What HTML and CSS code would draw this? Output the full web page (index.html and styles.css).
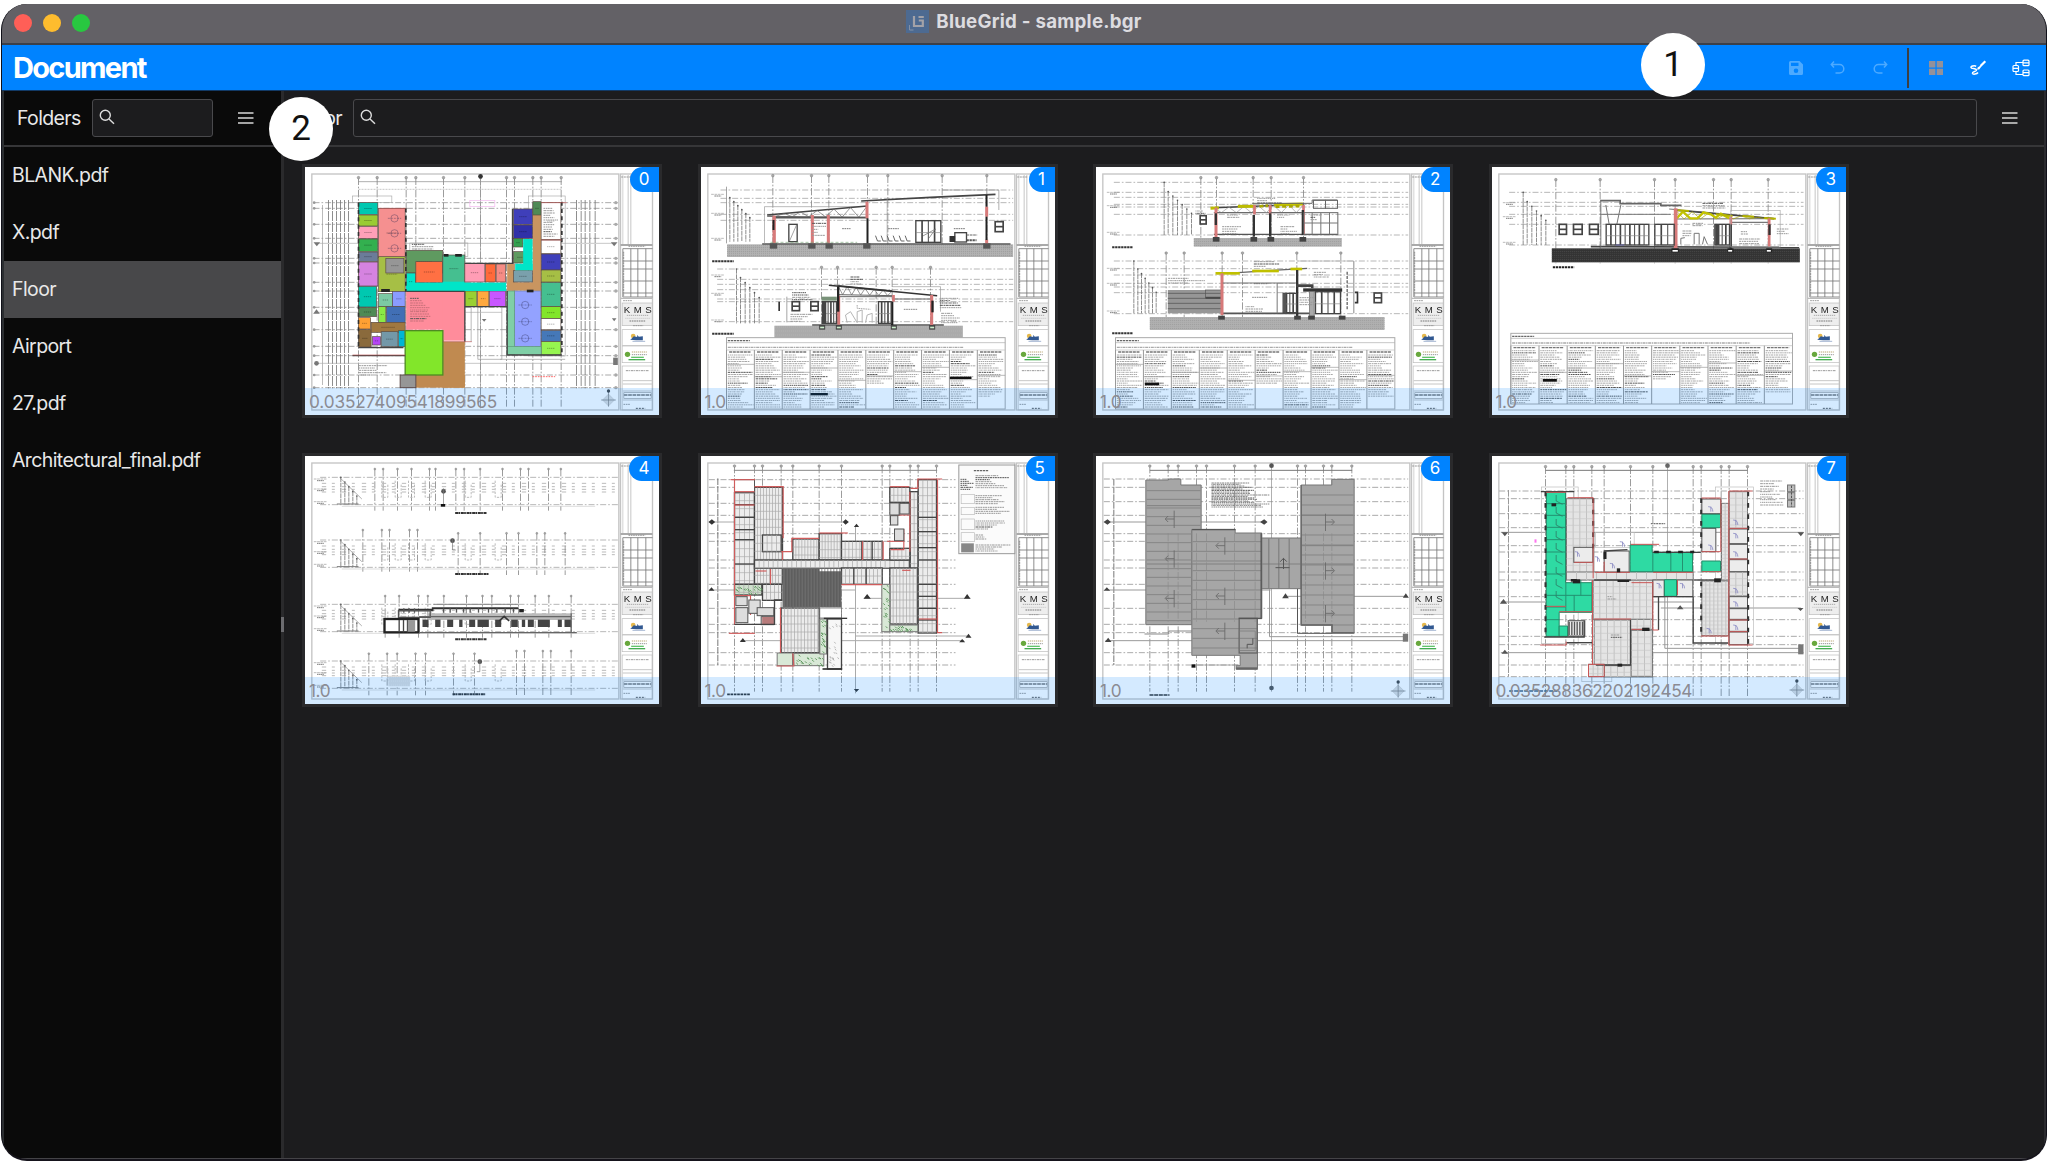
FILE: index.html
```html
<!DOCTYPE html>
<html lang="en">
<head>
<meta charset="utf-8">
<title>BlueGrid - sample.bgr</title>
<link rel="stylesheet" href="styles.css">
</head>
<body>
<div class="window">
  <div class="titlebar">
    <div class="lights"><i class="red"></i><i class="yellow"></i><i class="green"></i></div>
    <svg class="logo" viewBox="0 0 23 23"><rect width="23" height="23" fill="#4d6a91"/><path d="M8 6v10h8.800v-5.500h-4M12.500 7h5.300" fill="none" stroke="#a3a2a8" stroke-width="2.200"/><path d="M3.500 15v5h4" fill="none" stroke="#8491a5" stroke-width="1"/></svg>
    <span class="title">BlueGrid - sample.bgr</span>
  </div>
  <header class="header">
    <h1>Document</h1>
    <nav class="tools">
      <svg class="dim" viewBox="0 0 18 18"><path fill="currentColor" fill-rule="evenodd" d="M3.500 2h9L16 5.500v9a1.500 1.500 0 0 1-1.500 1.500h-11A1.500 1.500 0 0 1 2 14.500v-11A1.500 1.500 0 0 1 3.500 2zM4 3.700v3.300h7.500V3.700zM9 9.500a2.300 2.300 0 1 0 0 4.600 2.300 2.300 0 0 0 0-4.600z"/></svg>
      <svg class="dim" viewBox="0 0 18 18"><path d="M5 2.500 2.300 5.500 5 8.500M2.500 5.500h8a4.300 4.300 0 0 1 0 8.600H6.500"/></svg>
      <svg class="dim" viewBox="0 0 18 18"><path d="M13 2.500l2.700 3L13 8.500M15.500 5.500h-8a4.300 4.300 0 0 0 0 8.600h4"/></svg>
      <span class="sep"></span>
      <svg class="grey" viewBox="0 0 18 18"><path fill="currentColor" stroke="none" d="M2 2h6.400v6.400H2zM9.700 2H16v6.400H9.700zM2 9.700h6.400V16H2zM9.700 9.700H16V16H9.700z"/></svg>
      <svg viewBox="0 0 18 18"><path d="M7.200 7.200C5 6.400 1.600 7.200 2 8.600c.4 1.300 5.300.7 5.600 2.400.3 1.500-4.600 1.600-4.200 3.200.5 1.700 4.600.8 5.600-.7"/><path d="M16.300 2.300 11.500 7" stroke-width="2.200"/><path d="M11.600 6.600 8.600 8.500l-.4 2.200 2.200-.4 2-2.800z" fill="currentColor" stroke="none"/></svg>
      <svg class="flow" viewBox="0 0 20 18"><rect x="2" y="6.500" width="5.500" height="6" rx="1"/><path d="M2 9.300h5.500"/><rect x="12" y="1.200" width="6" height="5.500" rx="1"/><path d="M12 3.800h6"/><rect x="12" y="11" width="6" height="5.700" rx="1"/><path d="M12 13.700h6M5 6.500V3.500h7M5 12.500V15.500h7"/></svg>
    </nav>
  </header>
  <div class="body">
    <aside class="sidebar">
      <div class="bar">
        <span class="label">Folders</span>
        <div class="search"><svg viewBox="0 0 16 16"><circle cx="6.300" cy="6.300" r="5"/><path d="M10 10l5 4.800"/></svg></div>
        <svg class="menu" viewBox="0 0 16 14"><path d="M0 2h15.500M0 7h15.500M0 12h15.500"/></svg>
      </div>
      <ul class="folders">
        <li>BLANK.pdf</li>
        <li>X.pdf</li>
        <li class="active">Floor</li>
        <li>Airport</li>
        <li>27.pdf</li>
        <li>Architectural_final.pdf</li>
      </ul>
    </aside>
    <div class="divider"><i></i></div>
    <main class="main">
      <div class="bar">
        <span class="label">Floor</span>
        <div class="search"><svg viewBox="0 0 16 16"><circle cx="6.300" cy="6.300" r="5"/><path d="M10 10l5 4.800"/></svg></div>
        <svg class="menu" viewBox="0 0 16 14"><path d="M0 2h15.500M0 7h15.500M0 12h15.500"/></svg>
      </div>
      <div class="sheets">
        <figure><svg class="sheet" viewBox="30 36 1064 744"></svg><b>0</b><figcaption class="wide-a">0.03527409541899565</figcaption></figure>
        <figure><svg class="sheet" viewBox="32 36 1064 744"></svg><b>1</b><figcaption>1.0</figcaption></figure>
        <figure><svg class="sheet" viewBox="32 36 1064 744"></svg><b>2</b><figcaption>1.0</figcaption></figure>
        <figure><svg class="sheet" viewBox="34 36 1064 744"></svg><b>3</b><figcaption>1.0</figcaption></figure>
        <figure><svg class="sheet" viewBox="30 33 1064 744"></svg><b>4</b><figcaption>1.0</figcaption></figure>
        <figure><svg class="sheet" viewBox="32 33 1064 744"></svg><b>5</b><figcaption>1.0</figcaption></figure>
        <figure><svg class="sheet" viewBox="32 33 1064 744"></svg><b>6</b><figcaption>1.0</figcaption></figure>
        <figure><svg class="sheet" viewBox="34 33 1064 744"></svg><b>7</b><figcaption class="wide-b">0.035288362202192454</figcaption></figure>
      </div>
    </main>
  </div>
</div>
<div class="callout one">1</div>
<div class="callout two">2</div>
<script src="sheets.js"></script>
</body>
</html>
```
FILE: styles.css
```css
* { box-sizing: border-box; }
body { margin: 0; width: 2048px; height: 1162px; padding: 4px 1px 1px 1px; background: #fff; overflow: hidden; position: relative; font-family: Inter, "Liberation Sans", sans-serif; }
.window { height: 1157px; border-radius: 26px; overflow: hidden; display: flex; flex-direction: column; background: #1c1c1e; border: 1px solid #101019; border-top: 0; border-bottom: 2px solid #15131b; }
.titlebar { height: 41px; flex: none; background: #636166; border-bottom: 2px solid #3c4048; display: flex; align-items: center; justify-content: center; gap: 7px; position: relative; padding-bottom: 4px; }
.lights { position: absolute; left: 12px; top: 10px; display: flex; gap: 11px; }
.lights i { width: 18px; height: 18px; border-radius: 50%; }
.red { background: #ff5f57; }
.yellow { background: #febc2e; }
.green { background: #28c840; }
.logo { width: 23px; height: 23px; }
.title { font-size: 18.700px; font-weight: 700; color: #dddce0; letter-spacing: .25px; }
.header { height: 46px; flex: none; background: #0083ff; border-bottom: 1px solid #123a66; display: flex; align-items: center; justify-content: space-between; padding: 0 15px 0 11px; }
.header h1 { margin: 0; font-size: 29px; line-height: 46px; color: #fff; font-weight: 700; letter-spacing: -1.700px; }
.tools { display: flex; align-items: center; padding-top: 1px; }
.tools svg { width: 18px; height: 18px; margin-right: 24px; color: #fff; fill: none; stroke: currentColor; stroke-width: 1.500; }
.tools svg.dim { color: #4daaff; }
.tools svg.dim:first-child { stroke: none; }
.tools svg.grey { color: #93919a; }
.tools svg.flow { width: 20px; margin-right: 0; stroke-width: 1.200; }
.sep { width: 2px; height: 40px; background: #3d3f43; margin: 0 18px 0 -6px; }
.body { flex: 1; display: flex; min-height: 0; border-bottom: 1px solid #444347; }
.sidebar { width: 279px; background: #0a0a0a; border-left: 2px solid #2b2e31; }
.divider { width: 3px; background: #2a2a2c; display: flex; align-items: center; }
.divider i { width: 3px; height: 15px; background: #6c6c70; margin-top: 0; }
.main { flex: 1; min-width: 0; border-right: 2px solid #2b2b2f; }
.bar { height: 56px; border-bottom: 2px solid #363638; display: flex; align-items: center; color: #e8e8e8; }
.label { font-size: 19.500px; line-height: 24px; letter-spacing: -.65px; }
.search { height: 38px; border: 1px solid #49494c; border-radius: 3px; background: #1c1c1e; display: flex; align-items: center; padding: 0 6px 2px; }
.search svg { width: 16px; height: 16px; fill: none; stroke: #dcdcdc; stroke-width: 1.400; }
.menu { width: 16px; height: 14px; fill: none; stroke: #d8d8d8; stroke-width: 1.400; }
.sidebar .label { width: 79px; padding-left: 13px; margin-right: 9px; }
.sidebar .search { width: 121px; }
.sidebar .menu { margin-left: 25px; }
.main .label { width: 69px; text-align: right; padding-right: 11px; }
.main .search { flex: 1; }
.main .menu { margin: 0 26px 0 25px; }
.folders { list-style: none; margin: 0; padding: 0; }
.folders li { height: 57px; line-height: 57px; padding-left: 8px; font-size: 19.500px; letter-spacing: -.6px; color: #e8e8e8; }
.folders .active { background: #48484a; }
.sheets { padding: 17px 0 0 18px; display: grid; grid-template-columns: repeat(4, 360px); grid-auto-rows: 254px; gap: 35px 35.500px; }
figure { margin: 0; border: 3px solid #2a2a2c; background: #fff; position: relative; overflow: hidden; }
.sheet { display: block; width: 355px; height: 248px; filter: blur(.75px); }
figure b { position: absolute; top: 0; right: 0; height: 25px; line-height: 25px; padding: 0 10px 0 9px; background: #0083ff; color: #fff; border-radius: 13px 0 0 13px; font-weight: 400; font-size: 17px; letter-spacing: -.4px; }
figcaption { position: absolute; left: 0; right: 0; bottom: 0; height: 27px; line-height: 28px; padding-left: 4px; background: rgba(0, 131, 255, .17); color: #8b8b92; font-size: 17.200px; letter-spacing: -.4px; white-space: nowrap; }
.wide-a { letter-spacing: -.12px; }
.wide-b { letter-spacing: -.3px; }
.callout { position: absolute; width: 64px; height: 64px; border-radius: 50%; background: #fff; color: #111; font: 35px/64px Roboto, sans-serif; text-align: center; }
.one { left: 1641px; top: 33px; }
.two { left: 269px; top: 97px; }
```
FILE: sheets.js
```js
let seed = 7;
const rnd = () => (seed = (seed * 16807) % 2147483647) / 2147483647;
const line = (pts, c = '#777', w = 2, dash = '') =>
  `<polyline points="${pts}" fill="none" stroke="${c}" stroke-width="${w}" stroke-dasharray="${dash}"/>`;
const lines = (list, c, w, dash) => list.split(';').map(p => line(p, c, w, dash)).join('');
const rect = (x, y, w, h, fill = 'none', stroke = 'none', sw = 2) =>
  `<rect x="${x}" y="${y}" width="${w}" height="${h}" fill="${fill}" stroke="${stroke}" stroke-width="${sw}"/>`;
const rects = (list, fill, stroke, sw) => list.split(';').map(r => rect(...r.split(' '), fill, stroke, sw)).join('');
const rooms = (list, stroke = '#5a4a42') => list.split(';').map(r => {
  const [x, y, w, h, c] = r.trim().split(' ');
  return rect(x, y, w, h, '#' + c, stroke, 2) + line(`${+x + w * .3},${+y + h / 2} ${+x + w * .7},${+y + h / 2}`, 'rgba(0,0,0,.3)', 3, '4 2');
}).join('');
const notes = (x, y, w, h, step = 7, c = '#999') => {
  let s = '';
  for (let i = y; i < y + h; i += step) s += line(`${x},${i} ${x + w * (.4 + rnd() * .6)},${i}`, rnd() > .85 ? '#555' : c, 3, `${3 + (rnd() * 7 | 0)} 2 5 1.500`);
  return s;
};
/* column axes with bubbles, and level lines */
const axes = (xs, y1, y2, c = '#888', r = 4) => xs.split(' ').map(x =>
  line(`${x},${y1} ${x},${y2}`, c, 2.500, '22 5 5 5') + `<circle cx="${x}" cy="${y1}" r="${r}" fill="#aaa" stroke="#666"/>`).join('');
const levels = (ys, x1, x2, c = '#a8a8a8', dash = '18 6 5 6') => ys.split(' ').map(y => line(`${x1},${y} ${x2},${y}`, c, 2.500, dash)).join('');
const marks = (x, ys) => ys.split(' ').map(y => line(`${x - 10},${y} ${x + 30},${y}`, '#999', 2, '8 2') + line(`${x},${+y + 5} ${x + 20},${+y + 5}`, '#666', 3, '4 2')).join('');
const stairs = (x, y, bottom, n, dx, dy) => {
  let s = '';
  for (let i = 0; i < n; i++) s += line(`${x + i * dx},${y + i * dy} ${x + i * dx},${bottom}`, '#777', 2.500, '14 2') + `<circle cx="${x + i * dx}" cy="${y + i * dy}" r="2.500" fill="#555"/>`;
  return s;
};
const table = (x, y, w, h, cols) => {
  let s = rect(x, y, w, h, 'none', '#aaa', 3) + line(`${x},${y + 15} ${x + w},${y + 15}`, '#aaa') + line(`${x + 4},${y + 9} ${x + 70},${y + 9}`, '#666', 4, '7 2') +
    line(`${x + 4},${y + 29} ${x + w * .85},${y + 29}`, '#aaa', 4, '9 2 4 2') + line(`${x},${y + 37} ${x + w},${y + 37}`, '#bbb');
  const cw = w / cols;
  for (let i = 0; i < cols; i++) {
    s += line(`${x + i * cw},${y + 37} ${x + i * cw},${y + h}`, '#999', 3);
    s += line(`${x + i * cw + 8},${y + 43} ${x + (i + 1) * cw - 10},${y + 43}`, '#777', 4, '9 2');
    s += notes(x + i * cw + 4, y + 52, cw - 6, i === 9 ? (h - 52) * .8 : i === 5 ? 90 : h - 54, 6.500, '#a8a8a8');
    s += line(`${x + i * cw},${y + 80 + (i * 37 % 50)} ${x + (i + 1) * cw},${y + 80 + (i * 37 % 50)}`, '#999');
  }
  return s;
};
const soil = (x, y, w, h, c = '#b2b2b2', d = '#8c8c8c') => {
  let s = rect(x, y, w, h, c);
  for (let i = 4; i < h; i += 6) s += line(`${x},${y + i} ${x + w},${y + i}`, d, 2, i % 4 ? '3 3' : '2 4');
  return s;
};
const windowBox = (x, y, w = 24, h = 30) => rect(x, y, w, h, '#fff', '#444', 5) + line(`${x},${y + h / 2} ${x + w},${y + h / 2}`, '#444', 5);

const frame = () => rect(50, 57, 921, 708, 'none', '#c4c4c4', 4) + rect(976, 57, 96, 708, 'none', '#c4c4c4', 4) +
  line('999,60 999,268', '#aaa') + line('1007,60 1007,268', '#aaa') + line('983,60 983,268', '#bbb') + line('978,66 1010,66', '#999', 3, '6 2') +
  line('976,270 1072,270', '#aaa', 6) + line('1000,274 1050,274', '#666', 2, '5 2') +
  lines('983,281 1072,281;983,318 1072,318;983,342 1072,342;983,378 1072,378;983,414 1072,414;983,426 1072,426;983,281 983,426;1007,281 1007,426;1028,281 1028,426;1052,281 1052,426', '#777', 2.500) +
  line('985,290 985,422', '#999', 4, '6 2') +
  line('976,430 1072,430', '#bbb', 4) + line('984,437 1010,437', '#999', 3, '5 2') + rect(981, 444, 90, 68, '#eee', '#bbb') +
  '<text x="986" y="474" font-family="Liberation Sans" font-size="29" textLength="84" fill="#222">K M S</text>' +
  line('995,481 1060,481', '#aaa', 3, '4 2') + line('990,490 1065,490', '#bbb', 2, '4 2') + line('1003,498 1052,498', '#777', 3, '5 2') + line('1014,512 1044,512', '#777', 2, '5 2') +
  rect(981, 524, 90, 47, '#fff', '#bbb') + '<circle cx="1014" cy="543" r="7" fill="#e5b84c"/><path d="M1008 552l8-8 10 2 0-6 5 5 12-1v12h-20l-18-2z" fill="#315891"/>' + line('1012,559 1050,559', '#7893bb') +
  rect(981, 573, 90, 50, '#fff', '#bbb') + '<circle cx="997" cy="598" r="8" fill="#68a83d"/>' + line('1010,591 1055,591', '#bca876', 3, '4 2') + line('1010,599 1055,599', '#999', 3, '4 2') + line('1008,607 1046,607', '#62c36c', 4) + line('1000,614 1050,614', '#45ad52', 4) +
  rect(981, 633, 90, 132, 'none', '#bbb') + line('992,647 1062,647', '#999', 3, '8 2 3 2') + lines('983,677 1070,677;983,687 1070,687;983,708 1070,708;983,735 1070,735', '#aaa') +
  line('986,720 1068,720', '#777', 4, '11 2') + rect(986, 713, 82, 17, 'none', '#999') + line('985,748 1005,748', '#999', 3, '5 2') + line('1022,760 1050,760', '#555', 3, '6 3');

const compass = (x, y) => `<path d="M${x} ${y - 18}l18 18-18 18-18-18z" fill="#ddd" stroke="#aaa"/>` + lines(`${x},${y - 30} ${x},${y + 20};${x - 22},${y} ${x + 22},${y}`, '#777') + `<circle cx="${x}" cy="${y - 27}" r="5" fill="#444"/>`;
const planAxes = (xs, ys) => axes(xs, 68, 755) + levels(ys, 55, 968, '#999') + line('190,80 800,80', '#888') + line('190,103 800,103', '#aaa', 2, '6 3') +
  ys.split(' ').map(y => `<circle cx="57" cy="${y}" r="4" fill="#999"/><circle cx="962" cy="${y}" r="5" fill="#aaa"/>`).join('');
const truss = (x1, y1, x2, y2, h1, h2, c = '#666') => {
  let s = line(`${x1},${y1} ${x2},${y2}`, '#444', 4.500) + line(`${x1},${y1 + h1} ${x2},${y2 + h2}`, '#666', 3), z = '';
  for (let i = 0; i <= 12; i++) { const t = i / 12; z += `${x1 + (x2 - x1) * t},${y1 + (y2 - y1) * t + (i % 2 ? h1 + (h2 - h1) * t : 0)} `; }
  return s + line(z, c, 2);
};
const doors = (x, y, w, h, n) => { let s = rect(x, y, w, h, 'none', '#444', 4); for (let i = 1; i < n; i++) s += line(`${x + w * i / n},${y} ${x + w * i / n},${y + h}`, '#444', i % 2 ? 5 : 3); return s + line(`${x},${y + h * .55} ${x + w},${y + h * .55}`, '#888'); };

const sheets = [
  () => planAxes('190 246 333 362 445 509 556 634 658 713 738 798', '143 160 208 250 310 324 382 408 457 524 574 602 660 698') +
    [100, 112, 124, 136, 148, 160, 844, 858, 870, 884, 900].map(x => line(`${x},135 ${x},700`, '#777', 2.500, '30 3')).join('') +
    line('82,150 82,690', '#999') + line('60,265 960,265', '#aaa') + line('60,472 620,472', '#aaa') + line('60,625 960,625', '#aaa') +
    rect(172, 123, 118, 20, 'none', '#aaa') + rect(700, 123, 110, 480, 'none', '#aaa') + rect(344, 264, 174, 40, 'none', '#aaa') + line('556,60 556,760', '#999') +
    lines('548,458 548,613 620,613 620,458;528,458 528,560;615,613 810,613', '#999') + rect(524, 136, 75, 19, 'none', '#f4b7ef') +
    rooms('190 143 58 35 00c8b0;190 180 58 33 99cc33;190 215 58 35 ffa0b8;190 252 58 37 33b04f;190 291 58 28 6b7c99;190 321 58 72 d583e0;190 394 54 62 00c8b0;190 457 54 28 4f8a55;190 488 36 34 ffa033;190 524 38 52 8a6a3c;250 160 80 148 f59090;250 305 80 105 a6bf45;272 310 54 44 969696;250 416 42 38 7cc9a4;292 409 38 45 8a9cff;250 455 22 47 8aea45;274 455 56 47 416fb5;228 502 102 30 a07840;258 530 50 45 7398a8;310 527 20 48 00b5d5;232 545 24 25 b545f5;333 286 110 68 5f9a60;333 354 28 52 00e5c8;362 320 80 62 ff7043;443 300 66 82 45bf90;509 325 60 56 ff9db5;571 327 30 54 ff6a3a;603 327 28 54 f58c85;509 408 36 46 99d033;547 408 34 46 ffa93f;583 408 48 46 c857ff') +
    rect(333, 383, 300, 25, '#00e5c8') + rect(443, 380, 65, 35, '#00e5c8') + rects('333 409 176 115;443 409 66 148', '#ff8c9b') + rects('443 560 66 138;362 660 147 38', '#c08a50') +
    rect(330, 527, 113, 133, '#82e62a', '#4e8c22', 4) + rect(315, 660, 47, 38, '#969696', '#5c4a4a', 3) + rects('636 327 22 80;636 382 100 25;713 180 25 227', '#c99560') +
    rooms('655 162 57 46 3f3fba;655 210 57 40 3030a8;655 250 28 26 33a04f;655 290 38 34 5f9a60;655 347 57 34 7aa0ac;713 140 25 40 4f8a55;738 143 59 110 ffffff;738 255 59 40 ffffff;738 297 59 48 3f3fba;738 345 59 36 a6bf45;738 382 59 72 45bf90;738 455 59 36 82e62a;738 491 59 33 ffffff;738 526 59 33 4578b8;738 560 59 40 96f550') +
    rects('684 252 28 93;660 326 52 20', '#00e5c8') + rect(658, 408, 78, 166, '#93a2ff', '#6d7caf') + rects('636 408 22 190;636 575 102 23', '#7fcfa6', '#5e9a7c') +
    lines('800,140 800,602;332,160 332,410;190,143 190,576', '#333', 5, '12 10') + lines('172,602 330,602;190,578 325,578;636,408 636,600 800,600;509,455 636,455;652,162 652,325;509,325 655,325;333,409 509,409;509,409 509,560', '#444', 4) +
    lines('172,600 330,600;250,160 332,160;443,560 530,560;738,143 815,143;738,255 800,255', '#b55', 2) +
    [[690, 450], [690, 500], [690, 550], [298, 190], [298, 235], [298, 280]].map(([x, y]) => `<circle cx="${x}" cy="${y}" r="11" fill="none" stroke="rgba(40,40,80,.35)" stroke-width="3"/>` + line(`${x - 20},${y} ${x + 20},${y}`, 'rgba(40,40,80,.35)', 3, '6 3')).join('') +
    notes(345, 430, 65, 40, 7, '#c56f78') + notes(345, 470, 65, 30, 7, '#c56f78') + notes(745, 160, 46, 85, 7) + notes(190, 632, 90, 30) + notes(350, 268, 85, 15) + line('712,665 780,665', '#f66', 3, '5 3') +
    rects('258 402 26 9;695 404 20 8;446 297 14 8;480 297 20 8', '#222') + '<circle cx="556" cy="64" r="7" fill="#333"/><circle cx="64" cy="625" r="7" fill="#777"/><path d="M55 262h20l-10 12zM947 262h20l-10 12zM54 476l10-13 10 13zM560 492h14l-7 8zM950 490h14l-7 9z" fill="#777"/>' + rect(954, 608, 14, 22, '#777') + compass(940, 735),

  () => levels('105 130 143 178 196', 90, 968) + axes('247 363 415 531 592 755 889', 62, 300) + stairs(118, 128, 260, 6, 12, 12) + marks(72, '118 175 250 360 415 495') + line('108,95 108,265', '#777') +
    soil(110, 268, 858, 38) + line('215,267 960,267', '#555', 5) + line('222,265 222,155 510,155', '#999') + line('755,105 925,105 925,165', '#888') +
    truss(230, 180, 530, 153, 4, 34) + line('250,188 530,188', '#555', 5) + line('512,138 720,127 915,118', '#444', 5) + line('590,131 590,262', '#999') +
    rects('246 182 10 82;361 180 9 85;409 180 9 85;525 140 9 50;884 155 9 30;884 254 9 12', '#d77a7a') + lines('249,195 249,225;531,190 531,265;888,120 888,155;888,185 888,255', '#222', 6) +
    rects('238 265 22 16;353 265 22 16;405 265 22 16;518 265 22 16;878 265 22 16', '#555') + rect(295, 208, 25, 52, '#fff', '#444', 4) + line('297,258 318,210', '#777') + doors(676, 197, 75, 65, 4) + line('697,243 735,222 715,250', '#666') +
    windowBox(914, 200) + rect(793, 233, 35, 28, '#fff', '#444', 4) + rect(777, 243, 17, 18, '#333') + line('828,240 860,240', '#666', 3, '8 2') + line('828,256 858,256', '#555', 6, '7 2') +
    [555, 572, 590, 608, 626, 644].map(x => line(`${x},242 ${x + 6},258 ${x + 16},258`, '#666', 3)).join('') + notes(365, 205, 45, 45, 9) + line('455,221 480,221', '#777', 3, '5 2') + line('593,221 625,221', '#777', 3, '5 2') + line('790,221 825,221', '#777', 3, '5 2') + line('240,262 500,262', '#7aa87a', 2, '9 6') +
    line('65,319 130,319', '#333', 6, '7 2') + levels('342 373 388 404 432 440 500', 80, 968) + axes('393 441 557 605 720', 337, 545) + stairs(138, 342, 505, 1, 1, 1) + stairs(150, 368, 505, 5, 14, 15) +
    soil(252, 512, 565, 36) + line('365,510 760,510', '#555', 5) + truss(443, 392, 605, 408, 27, 14) + line('415,391 540,403 740,422', '#333', 4.500) + lines('605,432 722,432;445,425 605,425', '#666', 3) + line('605,395 750,395 750,470', '#999') +
    rects('440 422 9 87;719 420 9 90;605 420 8 20', '#d77a7a') + lines('443,395 443,470;605,440 605,510;726,437 726,472', '#222', 7) + rect(393, 425, 46, 12, '#799279') + doors(396, 440, 42, 65, 5) + doors(564, 440, 38, 65, 4) + rect(397, 440, 10, 65, '#444') +
    windowBox(305, 440, 22, 27) + windowBox(361, 440, 22, 27) + line('266,440 266,468', '#333', 5) + line('289,425 289,502', '#777') + notes(305, 413, 78, 22) + notes(300, 478, 70, 25) + notes(748, 430, 66, 30) + notes(752, 475, 60, 30) + notes(480, 366, 48, 22) +
    rects('386 510 18 14;436 510 18 14;601 510 18 14;716 510 18 14', '#444') + rects('389 515 12 5;439 515 12 5;604 515 12 5;719 515 12 5', '#cec') + lines('470,503 465,480 480,470 500,503;500,503 500,470 515,465 515,503;525,503 530,480 545,475 545,503', '#b5b5b5', 3) + line('640,463 680,463', '#888', 3, '5 2') + line('500,450 500,460 540,463', '#aaa', 3, '5 2') +
    line('65,536 130,536', '#333', 6, '7 2') + table(108, 548, 836, 214, 10) + rects('778 665 65 7;360 714 52 7', '#111'),

  () => levels('82 112 127 148 156 178 240', 85, 968) + axes('346 393 503 557 654', 68, 280) + stairs(236, 82, 240, 1, 1, 1) + stairs(248, 110, 240, 6, 14, 13) + marks(74, '112 152 232 340 385 468') + soil(325, 249, 444, 26) + line('385,238 755,238', '#555', 4) +
    truss(385, 158, 655, 148, 15, 25, '#999') + line('375,160 400,158', '#bcbc00', 9) + line('457,154 510,154', '#bcbc00', 9) + line('522,154 548,152', '#a9a900', 8, '12 6') + line('566,149 652,147', '#c4c400', 9) + line('570,155 650,153', '#aaa800', 8, '12 8') +
    rects('387 158 9 90;503 150 8 28;550 150 8 28;650 150 8 90', '#d77a7a') + lines('391,175 391,210;505,180 505,245;554,175 554,245;652,165 652,240', '#333', 7) + lines('395,173 500,173;555,173 650,173;500,145 680,145 680,135 755,135', '#666', 3) +
    rects('655 173 102 66;684 136 36 24;720 136 36 24', 'none', '#666', 3) + lines('680,173 680,238;706,173 706,238;732,173 732,238;655,204 757,204', '#777', 3) + windowBox(344, 182, 18, 25) + notes(515, 130, 75, 18) + notes(410, 215, 60, 24) + notes(585, 215, 50, 24) + notes(425, 180, 40, 8) + notes(575, 180, 40, 8) + notes(330, 168, 40, 12) + notes(675, 180, 35, 20) +
    rects('382 246 20 14;495 246 20 14;546 246 20 14;642 246 20 14', '#444') + line('80,277 143,277', '#333', 6, '7 2') +
    levels('318 341 360 385 396 413 476', 85, 968) + axes('242 296 410 471 634 766', 294, 522) + stairs(145, 318, 475, 1, 1, 1) + stairs(157, 342, 475, 6, 11, 14) + soil(193, 486, 704, 39) + line('410,475 680,475', '#555', 5) +
    rect(247, 405, 162, 70, '#969696') + lines('247,415 409,415;247,430 409,430;247,445 409,445;247,461 409,461', '#666', 3) + line('360,428 407,428', '#333', 5) + rect(360, 405, 47, 22, 'none', '#555') + line('395,356 470,352 560,346 665,340', '#666', 4) + lines('390,355 463,355;500,348 580,348;615,342 650,342', '#c0c000', 8) +
    rects('405 355 9 125', '#d77a7a') + lines('412,384 632,384;575,384 575,475', '#777', 3) + line('635,345 635,485', '#333', 7) + doors(593, 415, 40, 58, 4) + rect(593, 415, 9, 58, '#555') + line('632,392 680,392 680,400', '#444', 8) + rect(653, 400, 117, 10, '#333') + doors(690, 410, 75, 66, 4) + rect(672, 410, 14, 75, '#aaa', '#666') +
    lines('805,318 805,475', '#888', 3) + line('637,318 805,318', '#aaa') + windowBox(866, 414, 22, 29) + line('808,412 816,412 816,443 808,443', '#333', 5) + lines('785,350 785,465', '#666', 4, '9 4') + notes(505, 320, 85, 20) + notes(685, 352, 50, 20) + notes(480, 455, 55, 18) + notes(642, 428, 50, 24) + line('500,427 545,427', '#888', 3, '5 2') + line('505,386 548,386', '#777', 3, '5 2') + notes(248, 370, 130, 20) +
    rects('398 482 20 12;626 482 20 12;668 482 20 12;760 482 20 12', '#444') + line('80,535 143,535', '#333', 6, '7 2') + table(90, 548, 838, 214, 10) + rect(178, 683, 43, 8, '#111'),

  () => levels('112 142 154 178 208 270', 85, 968) + axes('225 358 521 583 698 751 862', 74, 325) + stairs(127, 112, 270, 1, 1, 1) + stairs(139, 140, 270, 5, 14, 14) + marks(76, '143 185 262') + soil(213, 280, 744, 42, '#333', '#5a5a5a') + line('330,275 955,277', '#444', 5) +
    line('358,137 418,137 418,146 540,146 540,151 602,151', '#666', 5) + lines('360,137 360,275;375,150 385,208;420,150 408,208;358,178 570,178;565,162 880,190', '#777', 3) + truss(585, 166, 880, 191, 26, 0, '#a8a800') + line('588,190 606,170 628,190 650,190 668,172 690,178 705,188 720,176 745,190', '#c4c400', 7) + lines('590,166 625,168;785,183 820,185;850,189 885,191;705,178 755,183', '#b5b500', 6) +
    line('750,202 865,202', '#777', 4) + rects('579 160 11 120;746 185 8 25;861 190 8 85', '#d77a7a') + lines('750,208 750,282;866,208 866,240', '#333', 7) + windowBox(235, 208, 22, 30) + windowBox(278, 208, 26, 30) + windowBox(326, 208, 26, 30) +
    doors(376, 208, 128, 62, 9) + doors(522, 208, 58, 62, 3) + doors(702, 208, 44, 62, 4) + rect(703, 210, 12, 60, '#444') + rect(750, 166, 148, 110, 'none', '#aaa') + lines('600,268 600,250 612,248;640,268 640,235 655,235 655,268;665,268 670,245 680,268', '#777', 3) + notes(605, 228, 60, 15) + notes(780, 230, 40, 8) + notes(775, 252, 70, 20) + notes(888, 222, 38, 20) + notes(665, 145, 75, 15) + notes(635, 205, 35, 10) +
    rects('572 280 22 12;740 280 18 12;856 280 18 12', '#222') + rects('575 285 16 5;742 285 12 5;858 285 12 5', '#fff') + line('216,337 280,337', '#222', 6, '7 2') + line('404,270 430,270', '#66c') + table(90, 535, 845, 212, 10) + rect(186, 672, 42, 8, '#111'),

  () => {
    const band = (y, top, xs) => axes(xs, top, top + 125, '#888', 3) + levels(`${y} ${y + 82}`, 75, 968) + [18, 28, 36, 44].map(d => line(`80,${y + d} 968,${y + d}`, '#bbb', 3, '13 17 9 21')).join('') +
      stairs(137, y, y + 80, 5, 12, 14) + line(`133,${y} 200,${y + 65}`, '#888') + line(`125,${y + 80} 190,${y + 80}`, '#777', 3) + marks(66, `${y + 5} ${y + 35} ${y + 73}`) + line(`140,${y + 87} 900,${y + 87}`, '#ccc') + [260, 300, 340, 390, 510, 600].map(x => line(`${x},${y + 10} ${x},${y + 60} ${x + 18},${y + 60} ${x + 18},${y + 20}`, '#bbb', 3, '7 4')).join('');
    return band(97, 72, '239 264 307 349 403 421 482 507 555 622 676 700 760 797') + band(285, 255, '203 260 283 343 367') + axes('489 555 634 670 725 749 810', 265, 390, '#888', 3) +
      band(478, 453, '270 312 370 398 446 514 562 590 646 670 720 761 828') + band(648, 626, '221 276 306 361 391 475 538') + axes('664 688 743 767 828', 618, 750, '#888', 3) +
      '<circle cx="445" cy="139" r="7" fill="#555"/><circle cx="472" cy="287" r="7" fill="#555"/><circle cx="554" cy="650" r="7" fill="#555"/>' + lines('445,130 445,178;472,280 472,315 482,315;554,642 554,680 545,680', '#777') + rect(437, 177, 13, 8, '#111') +
      lines('480,204 575,204;480,387 582,387;480,583 575,583;472,748 570,748', '#333', 6, '9 1 5 2') + rect(395, 505, 432, 20, '#bbb') + line('310,495 415,495', '#333', 8) + line('410,490 670,490', '#333', 6) + line('415,478 670,478', '#888', 3) + rect(672, 492, 14, 10, '#222') +
      rect(310, 497, 95, 20, 'none', '#555', 4) + [326, 342, 358, 445, 465, 484, 505, 525, 550, 580, 605, 630, 655].map(x => line(`${x},490 ${x},503`, '#555', 4)).join('') + rect(268, 522, 102, 40, '#fff', '#222', 7) + [312, 325, 337].map(x => line(`${x},525 ${x},562`, '#444', 4)).join('') + rect(338, 525, 22, 35, '#999') +
      lines('372,515 828,515;372,563 845,563;828,505 828,563', '#666', 4) + [[382, 18], [420, 16], [456, 18], [492, 10], [522, 18], [547, 34], [600, 18], [648, 20], [680, 10], [698, 18], [728, 36], [788, 12], [808, 19]].map(([x, w]) => rect(x, 524, w, 22, '#444')).join('') + line('612,528 627,514 642,528', '#333', 5) + soil(280, 692, 65, 32, '#e2e2e2', '#bbb');
  },

  () => {
    let g = '';
    const grid = (x, y, w, h, s = 9, fill = '#ececec') => { g += rect(x, y, w, h, fill, '#444', 4); for (let i = s; i < w; i += s) g += line(`${x + i},${y} ${x + i},${y + h}`, '#a5a5a5', 2); for (let i = 24; i < h; i += 24) g += line(`${x},${y + i} ${x + w},${y + i}`, '#aaa'); };
    g += axes('132 192 216 272 307 386 453 575 598 659 683 738', 63, 740) + levels('104 127 175 211 266 289 345 369 418 490 538 563 623 660', 55, 795, '#999') + line('130,76 740,76', '#888', 3) + line('82,100 82,660', '#777', 3, '20 3') +
      lines('55,231 465,231;55,435 495,435 495,745;495,573 830,573;150,587 820,587;520,460 840,460;495,245 495,440', '#aaa', 3);
    grid(132, 143, 60, 275, 15); grid(192, 127, 84, 290); grid(216, 270, 56, 50, 14); grid(307, 282, 79, 63); grid(386, 266, 67, 79); grid(453, 289, 122, 56, 11); grid(192, 345, 466, 25, 14); grid(453, 369, 122, 49, 12); grid(598, 127, 60, 45, 12); grid(659, 140, 24, 230, 12); grid(598, 369, 84, 168, 10); grid(683, 104, 55, 460, 14); grid(272, 489, 114, 134, 10); grid(216, 418, 58, 48, 12); grid(598, 310, 60, 35, 12); grid(132, 418, 82, 32, 14, '#cfe0cd');
    g += rect(132, 104, 60, 38, '#fff', '#555', 3) + lines('132,179 192,179;132,217 192,217;132,254 192,254;132,284 192,284;132,357 192,357;683,217 738,217;683,260 738,260;683,308 738,308;683,345 738,345;683,418 738,418;683,454 738,454;683,490 738,490;683,525 738,525;514,289 514,345;545,289 545,345;490,369 490,418;527,369 527,418', '#444', 4);
    g += '<path d="M276 370h110v9h67v108H276z" fill="#6b6b6b"/>'; for (let x = 286; x < 450; x += 9) g += line(`${x},372 ${x},485`, '#505050');
    g += rects('574 418 24 142;598 540 84 20;310 625 90 37;260 624 46 38;388 522 20 105', '#d8e8d6', '#777', 3) + rect(411, 522, 42, 150, '#f7f7f7', '#444', 4);
    for (let i = 0; i < 110; i++) { const z = i % 5, b = [[577, 420, 18, 135], [600, 543, 80, 14], [312, 628, 86, 32], [390, 525, 17, 95], [134, 422, 78, 24]][z]; const x = b[0] + rnd() * b[2], y = b[1] + rnd() * b[3]; g += line(`${x},${y} ${x + 5},${y + 5}`, '#5f9860', 3); }
    for (let i = 0; i < 22; i++) { const x = 415 + rnd() * 32, y = 530 + rnd() * 135; g += line(`${x},${y} ${x + 4},${y + 5}`, '#999'); }
    g += lines('132,104 132,540;120,104 194,104;192,125 278,125 278,280;132,140 192,140;132,180 192,180;272,320 304,320 304,280 386,280;386,264 472,264;276,320 276,345;598,125 656,125;660,130 682,130 682,102 755,102;741,104 741,563 755,563;453,419 575,419;115,565 193,565;658,140 658,320;600,314 640,314 640,252;270,488 270,624;258,663 310,663 307,625;578,289 578,345;516,289 516,345;132,452 180,452 180,510;195,378 228,378;635,376 660,376;590,289 640,289;240,372 240,418;600,210 655,210;685,522 738,522', '#d05c5c', 3.500);
    g += rects('598 174 28 36;628 175 28 32;600 212 22 28;612 252 28 35;136 455 34 27;136 488 36 45;175 465 34 40;200 488 50 24;212 515 38 24', '#ddd', '#555', 3) + rect(215, 516, 35, 22, '#b77b7b') + line('132,538 252,538 252,465 275,465', '#444', 4) + rect(388, 489, 65, 30, '#fff', '#555') + line('400,520 470,520', '#333', 4) + line('396,672 455,672', '#333', 5);
    g += '<path d="M457 231l8-8 10 8-10 8zM490 246h16l-8-10zM519 461h22l-11-14zM820 461h20l-10-14zM825 578h18l-9-12zM806 592h18l-9-10zM148 591h18l-9-12zM54 437h18l-9-10zM54 231l10-8 10 8-10 8zM490 732h16l-8 9z" fill="#333"/>' + line('110,748 180,748', '#333', 5, '8 2') +
      rect(805, 60, 168, 266, '#fbfbfb', '#999', 3) + line('850,77 895,77', '#666', 4, '7 2') + notes(855, 92, 105, 40, 6) + notes(810, 103, 42, 35, 6, '#555') + notes(855, 152, 108, 27, 6) + notes(855, 187, 112, 24, 6) + notes(855, 228, 90, 30, 6) + notes(855, 270, 40, 15, 6) + notes(855, 300, 105, 22, 6) + rects('812 148 40 28;812 187 40 22;812 222 40 32;812 263 40 27', 'none', '#bbb') + rect(812, 295, 38, 27, '#888');
    return g;
  },

  () => {
    let g = axes('193 248 278 333 363 447 509 636 660 714 739 799', 63, 740) + levels('102 127 170 211 266 289 345 369 418 490 538 563 623 660', 55, 968, '#999') + line('193,76 800,76', '#777', 3) + line('85,102 85,660', '#777', 3, '20 3') + line('558,55 558,740', '#888') +
      lines('65,231 530,231;65,435 555,435;600,454 960,454;552,433 552,575 960,575;60,587 960,587', '#999', 3) + line('177,567 250,567 250,558 330,558', '#888', 3) + line('636,430 636,565 740,565 740,540', '#555', 3);
    g += '<g fill="#a6a6a6" stroke="#777" stroke-width="3"><path d="M181 105h68v-3h37v18h61v134h-27v285H181z"/><path d="M319 256v-3h130v11h80v257h-13v152h-64v-11h12v-31H319z"/><path d="M529 279h118v152H529z"/><path d="M647 120h92v-17h67v462h-67v-25h-92z"/></g>';
    for (let y = 137; y < 540; y += 26) g += line(`183,${y} ${y < 253 ? 345 : 319},${y}`, '#858585', 3);
    for (let y = 290; y < 630; y += 29) g += line(`321,${y} ${y < 520 ? 527 : 514},${y}`, '#858585', 3);
    for (let y = 150; y < 560; y += 30) g += line(`649,${y} 804,${y}`, '#858585', 3);
    g += lines('184,357 804,357;184,182 346,182;649,211 804,211;649,302 804,302', '#808080', 3) + [550, 580, 611].map(x => line(`${x},281 ${x},430`, '#777', 3)).join('') + [248, 278, 333, 363, 447, 509, 660, 714, 739].map(x => line(`${x},265 ${x},530`, '#8a8a8a', 2, '24 5')).join('');
    const arrow = (x, y, d = 1) => lines(`${x},${y - 25} ${x},${y + 27};${x},${y} ${x - 25 * d},${y};${x - 18 * d},${y - 9} ${x - 27 * d},${y} ${x - 18 * d},${y + 9}`, '#666', 2.500);
    g += arrow(266, 222) + arrow(266, 341) + arrow(266, 460) + arrow(418, 302) + arrow(418, 453) + arrow(418, 558) + arrow(720, 231, -1) + arrow(720, 377, -1) + arrow(720, 505, -1) + lines('594,340 594,372;584,350 594,340 604,350;570,368 612,368', '#555', 3) + rect(461, 520, 54, 104, 'none', '#666', 4) + rect(461, 558, 48, 58, 'none', '#777') + line('485,610 485,598 502,598 502,580', '#555', 3) + line('320,254 450,254', '#555', 4) + line('527,265 527,520 460,520', '#555', 4) + line('647,120 647,540 740,540 740,563 805,563', '#666', 4) + line('452,670 515,670', '#666', 6);
    g += notes(378, 114, 200, 76, 9, '#888') + notes(378, 118, 190, 66, 9, '#777') + rect(318, 658, 12, 10, '#111') + line('330,660 460,660', '#888') + '<path d="M524 231l12-8 10 8-10 8zM54 231l12-8 10 8-10 8zM590 460h20l-10-15zM952 458h18l-9-13zM54 437h20l-10-10zM58 591h20l-10-13z" fill="#444"/><circle cx="558" cy="62" r="7" fill="#555"/><circle cx="558" cy="729" r="7" fill="#555"/>' + rect(952, 566, 16, 24, '#777') + line('192,750 252,750', '#333', 4, '12 2') + compass(938, 738);
    return g;
  },

  () => {
    let g = axes('194 255 279 333 370 449 516 637 661 721 745 800', 65, 755) + levels('138 161 206 248 302 321 381 405 455 524 574 599 660 695', 55, 968, '#999') + line('194,76 800,76', '#777', 3) + line('83,135 83,695', '#999', 3, '20 3') + line('560,55 560,755', '#888') +
      lines('60,262 968,262;60,471 640,471;60,623 968,623;540,489 960,489;552,455 552,610 960,610', '#999', 3) + rects('182 126 110 470;344 262 116 45;704 126 114 470;303 660 90 50', 'none', '#bbb');
    const grid = (x, y, w, h, s = 20) => { g += rect(x, y, w, h, '#e4e4e4', '#777', 3); for (let i = s; i < w; i += s) g += line(`${x + i},${y} ${x + i},${y + h}`, '#c2c2c2', 3); for (let i = s; i < h; i += s) g += line(`${x},${y + i} ${x + w},${y + i}`, '#c8c8c8', 2); };
    grid(257, 161, 82, 240); grid(745, 140, 55, 110); grid(745, 381, 55, 72); grid(337, 405, 178, 118); grid(449, 523, 66, 30); grid(340, 525, 109, 135); grid(663, 408, 80, 164, 12); grid(370, 662, 145, 34); grid(451, 556, 64, 138); grid(257, 381, 380, 24, 30); grid(323, 658, 48, 37, 14); grid(722, 175, 22, 230, 11);
    g += rects('279 307 57 45;370 318 75 63;745 252 55 44;745 298 55 44;745 344 55 36;745 455 55 34;745 491 55 32;745 525 55 34;745 561 55 38;663 162 57 44;663 250 42 70;516 405 34 50;588 405 48 50;262 527 50 46', '#ececec', '#555', 3);
    g += '<g fill="#2edaa3" stroke="#258a68" stroke-width="3"><path d="M197 141h57v272h79v89h-98v70h25l-26 2h-38z"/><path d="M448 300h66v22h121v58H448zM551 404h36v50h-36zM663 208h56v40h-56zM663 348h56v32h-56z"/><path d="M235 543h25v31h-25z"/></g>' +
      lines('197,176 254,176;197,211 254,211;197,247 254,247;197,284 254,284;197,321 254,321;197,387 254,387;197,451 333,451;197,486 254,486;197,524 235,524;255,413 255,500;280,450 280,500;300,405 300,452;516,322 516,380;570,322 570,380;605,322 605,380', '#249170', 3) + rects('276 403 22 12;212 175 14 9', '#222');
    for (let y = 150; y < 460; y += 36) g += line(`226,${y} 226,${y + 18} 245,${y + 28}`, '#2d7e66', 2.500);
    for (let x = 265; x < 310; x += 8) g += line(`${x},530 ${x},570`, '#555', 4);
    g += lines('194,140 194,576;337,160 337,320;802,140 802,600;661,160 661,320;661,410 661,572', '#333', 6, '14 20') + lines('180,140 280,140;190,576 310,576 310,527;340,405 450,405;516,455 637,455;637,455 637,594 742,594;533,455 533,555;449,525 449,660 345,660;370,318 440,314;516,322 660,322;257,593 335,593;640,405 720,405', '#444', 4);
    g += lines('178,600 256,600 256,590;196,142 255,142;260,158 337,158 337,400;450,298 535,298;516,410 516,555 533,555;452,413 516,413;452,553 500,553;335,405 335,660;340,522 450,522;323,658 370,658 370,695 323,695 323,658;662,159 720,159;720,162 720,320 662,320;744,138 744,600 815,600;745,138 815,138;745,250 800,250;745,342 800,342;745,525 800,525;745,560 800,560;196,484 255,484;235,500 335,500;280,352 335,352;343,382 447,382;517,382 637,382;660,573 742,573;370,350 370,382;590,405 590,450;663,380 720,380', '#c95656', 3);
    for (const [x, y] of [[290, 320], [350, 335], [395, 355], [425, 290], [535, 415], [605, 415], [690, 185], [765, 225], [765, 265], [765, 320], [765, 430], [765, 470], [765, 540], [685, 550], [690, 300]]) g += `<path d="M${x - 8} ${y}q14 0 14 15M${x} ${y}v15" fill="none" stroke="#8c8cc4" stroke-width="2.500"/>`;
    g += rects('368 320 9 22;270 402 18 8;700 400 20 12;408 370 10 12;410 405 35 6;410 656 14 9;484 548 22 10', '#222') + line('520,321 640,321', '#222', 8, '14 22') + line('510,236 553,236', '#777', 4, '6 2') + notes(380, 455, 30, 8) + notes(390, 570, 35, 8) + notes(838, 108, 75, 75, 8) + rects('920 120 22 20;920 143 22 20;920 166 22 20', '#bbb', '#777', 3) + line('932,122 932,185', '#555', 3, '7 3') +
      rect(161, 283, 6, 10, '#ff75f0') + line('85,738 230,738', '#426382', 5, '12 3') + '<circle cx="560" cy="62" r="7" fill="#666"/><path d="M62 262h20l-10 12zM950 262h20l-10 12zM57 476l11-14 11 14zM588 493l10-12 10 12zM950 489h18l-9 9zM62 626h20l-10-12z" fill="#555"/>' + rect(952, 598, 16, 30, '#777') + compass(948, 735);
    return g;
  }
];

document.querySelectorAll('.sheet').forEach((svg, i) => {
  const { x, y } = svg.viewBox.baseVal;
  svg.innerHTML = rect(x, y, 1075, 750, '#fff') + `<g transform="translate(${x - 30} ${y - 36})">${frame()}</g>` + sheets[i]();
});
```
